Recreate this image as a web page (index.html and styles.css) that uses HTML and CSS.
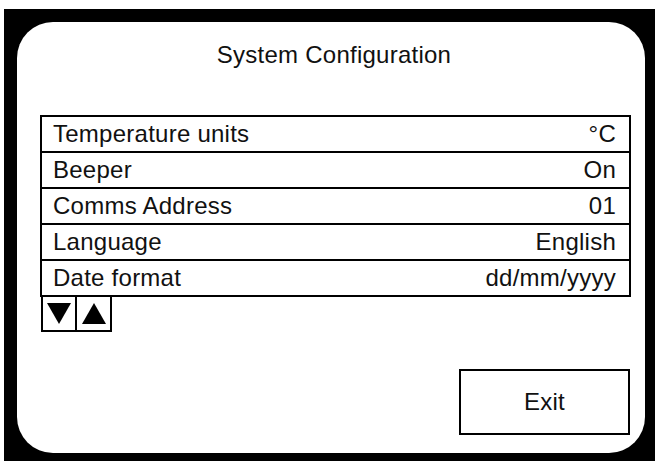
FILE: index.html
```html
<!DOCTYPE html>
<html lang="en">
<head>
  <meta charset="UTF-8">
  <title>System Configuration</title>
  <link rel="stylesheet" href="styles.css">
</head>
<body>
  <div class="screen">
    <div class="panel">
      <h1 class="title">System Configuration</h1>

      <div class="settings">
        <div class="row"><span>Temperature units</span><span>°C</span></div>
        <div class="row"><span>Beeper</span><span>On</span></div>
        <div class="row"><span>Comms Address</span><span>01</span></div>
        <div class="row"><span>Language</span><span>English</span></div>
        <div class="row"><span>Date format</span><span>dd/mm/yyyy</span></div>
      </div>

      <div class="pager">
        <button class="arrow down" aria-label="Down">
          <svg width="24" height="21" viewBox="0 0 24 21"><polygon points="0,0 24,0 12,21" /></svg>
        </button>
        <button class="arrow up" aria-label="Up">
          <svg width="24" height="21" viewBox="0 0 24 21"><polygon points="12,0 24,21 0,21" /></svg>
        </button>
      </div>

      <button class="exit">Exit</button>
    </div>
  </div>
</body>
</html>
```

FILE: styles.css
```css
* { box-sizing: border-box; margin: 0; padding: 0; }
html, body {
  width: 655px;
  height: 461px;
  overflow: hidden;
  background: #fff;
}
body {
  font-family: 'Liberation Sans', Arial, sans-serif;
  font-size: 24px;
  letter-spacing: 0.25px;
  color: #111;
}
.screen {
  margin: 9px 0 0 4px;
  padding: 13px;
  width: 654px;
  height: 457px;
  background: #000;
}
.panel {
  display: flex;
  flex-direction: column;
  width: 628px;
  height: 431px;
  padding-top: 19px;
  background: #fff;
  border-radius: 36px;
}
.title {
  font-size: 24px;
  font-weight: 400;
  line-height: 28px;
  text-align: center;
  padding-left: 6px;
  margin-bottom: 46px;
}
.settings {
  margin-left: 23px;
  width: 591px;
  border: 2px solid #000;
  border-bottom: none;
}
.row {
  display: flex;
  justify-content: space-between;
  align-items: center;
  height: 36px;
  padding: 0 13px 0 11px;
  border-bottom: 2px solid #000;
  line-height: 28px;
}
.pager {
  display: flex;
  margin-left: 24px;
}
.arrow {
  display: flex;
  align-items: center;
  justify-content: center;
  width: 36px;
  height: 35px;
  background: #fff;
  border: 2px solid #000;
  border-top: none;
}
.arrow + .arrow {
  width: 35px;
  border-left: none;
}
.arrow svg { display: block; fill: #000; }
.exit {
  align-self: flex-end;
  margin: 37px 15px 0 0;
  width: 171px;
  height: 66px;
  background: #fff;
  border: 2px solid #000;
  font-family: 'Liberation Sans', Arial, sans-serif;
  font-size: 24px;
  letter-spacing: 0.25px;
  color: #111;
}
```
